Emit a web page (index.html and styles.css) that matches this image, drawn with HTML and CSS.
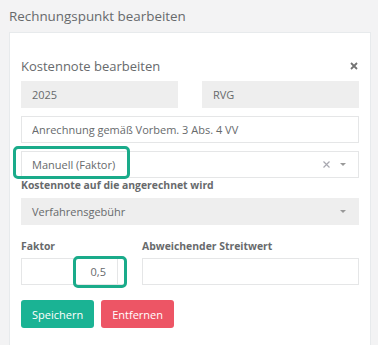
FILE: index.html
```html
<!DOCTYPE html>
<html lang="de">
<head>
    <meta charset="UTF-8">
    <meta name="viewport" content="width=device-width, initial-scale=1.0">
    <title>Rechnungspunkt bearbeiten</title>
    <link rel="stylesheet" href="styles.css">
</head>
<body>
    <h3 class="page-title">Rechnungspunkt bearbeiten</h3>
    <div class="ibox">
        <div class="ibox-head">
            <h4>Kostennote bearbeiten</h4>
            <svg class="close" width="8" height="8" viewBox="0 0 8 8"><path d="M1 1L7 7M7 1L1 7" stroke="#737373" stroke-width="1.8"/></svg>
        </div>
        <div class="row-2">
            <input class="form-control" type="text" value="2025" disabled>
            <input class="form-control" type="text" value="RVG" disabled>
        </div>
        <input class="form-control gap" type="text" value="Anrechnung gemäß Vorbem. 3 Abs. 4 VV">
        <div class="select gap">
            <span class="select-value">Manuell (Faktor)</span>
            <svg class="clear" width="7" height="7" viewBox="0 0 7 7"><path d="M0.5 0.5L6.5 6.5M6.5 0.5L0.5 6.5" stroke="#a8a8b0" stroke-width="1.2"/></svg>
            <span class="caret"></span>
            <div class="mark mark-select"></div>
        </div>
        <label class="lbl">Kostennote auf die angerechnet wird</label>
        <div class="select disabled">
            <span class="select-value">Verfahrensgebühr</span>
            <span class="caret"></span>
        </div>
        <div class="row-factor">
            <div>
                <label class="lbl">Faktor</label>
                <div class="num">
                    <input class="form-control num-input" type="text" value="0,5">
                    <span class="spin"></span>
                    <div class="mark mark-num"></div>
                </div>
            </div>
            <div>
                <label class="lbl">Abweichender Streitwert</label>
                <input class="form-control" type="text" value="">
            </div>
        </div>
        <div class="buttons">
            <button class="btn btn-primary">Speichern</button>
            <button class="btn btn-danger">Entfernen</button>
        </div>
    </div>
</body>
</html>
```

FILE: styles.css
```css
body {
    margin: 0;
    background: #f3f3f4;
    font-family: "Open Sans", "Liberation Sans", sans-serif;
    color: #676a6c;
    font-size: 11px;
}
.page-title {
    margin: 0;
    padding: 7px 9px 0;
    height: 25px;
    font-size: 13.4px;
    font-weight: normal;
    line-height: 18px;
}
.ibox {
    margin: 0 7px 0 9px;
    background: #fff;
    border: 1px solid #e7eaec;
    padding: 23px 11px 40px;
}
.ibox-head {
    display: flex;
    align-items: center;
    justify-content: space-between;
    height: 20px;
    margin-bottom: 5px;
}
.ibox-head h4 {
    margin: 0;
    font-size: 13px;
    font-weight: normal;
    line-height: 20px;
}
.close {
    margin-right: 1px;
}
.form-control {
    display: block;
    box-sizing: border-box;
    width: 100%;
    height: 27px;
    margin: 0;
    padding: 0 10px;
    border: 1px solid #e5e6e7;
    background: #fff;
    font-family: inherit;
    font-size: 11px;
    color: #676a6c;
    outline: none;
}
.form-control:disabled {
    background: #eeeeee;
    border-color: #eeeeee;
}
.row-2 {
    display: grid;
    grid-template-columns: 1fr 1fr;
    gap: 24px;
}
.gap {
    margin-top: 8px;
}
.select {
    position: relative;
    box-sizing: border-box;
    height: 27px;
    border: 1px solid #e5e6e7;
    display: flex;
    align-items: center;
    padding: 0 10px;
}
.select.disabled {
    background: #eeeeee;
    border-color: #eeeeee;
}
.select-value {
    flex: 1;
}
.clear {
    margin-right: 10px;
}
.caret {
    width: 0;
    height: 0;
    border-left: 3px solid transparent;
    border-right: 3px solid transparent;
    border-top: 3px solid #999;
    margin-right: 2px;
}
.lbl {
    display: block;
    font-weight: bold;
    font-size: 10.4px;
    line-height: 15px;
    margin-bottom: 5px;
}
.row-factor {
    display: grid;
    grid-template-columns: 104px 1fr;
    gap: 17px;
    margin-top: 14px;
}
.row-factor .lbl {
    margin-bottom: 4px;
}
.num {
    position: relative;
}
.num-input {
    text-align: right;
    padding-right: 18px;
}
.spin {
    position: absolute;
    top: 1px;
    bottom: 1px;
    left: 96px;
    border-left: 1px solid #e5e6e7;
}
.mark {
    position: absolute;
    border: 3px solid #1aab8a;
    border-radius: 5px;
}
.mark-select {
    left: -9px;
    top: -6px;
    width: 111px;
    height: 27px;
}
.mark-num {
    left: 52px;
    top: -2px;
    width: 48px;
    height: 26px;
}
.buttons {
    display: flex;
    gap: 7px;
    margin-top: 15px;
}
.btn {
    height: 28px;
    padding: 0 11px;
    border: none;
    border-radius: 3px;
    font-family: inherit;
    font-size: 11px;
    color: #fff;
}
.btn-primary {
    background: #1ab394;
}
.btn-danger {
    background: #ed5565;
}
```
